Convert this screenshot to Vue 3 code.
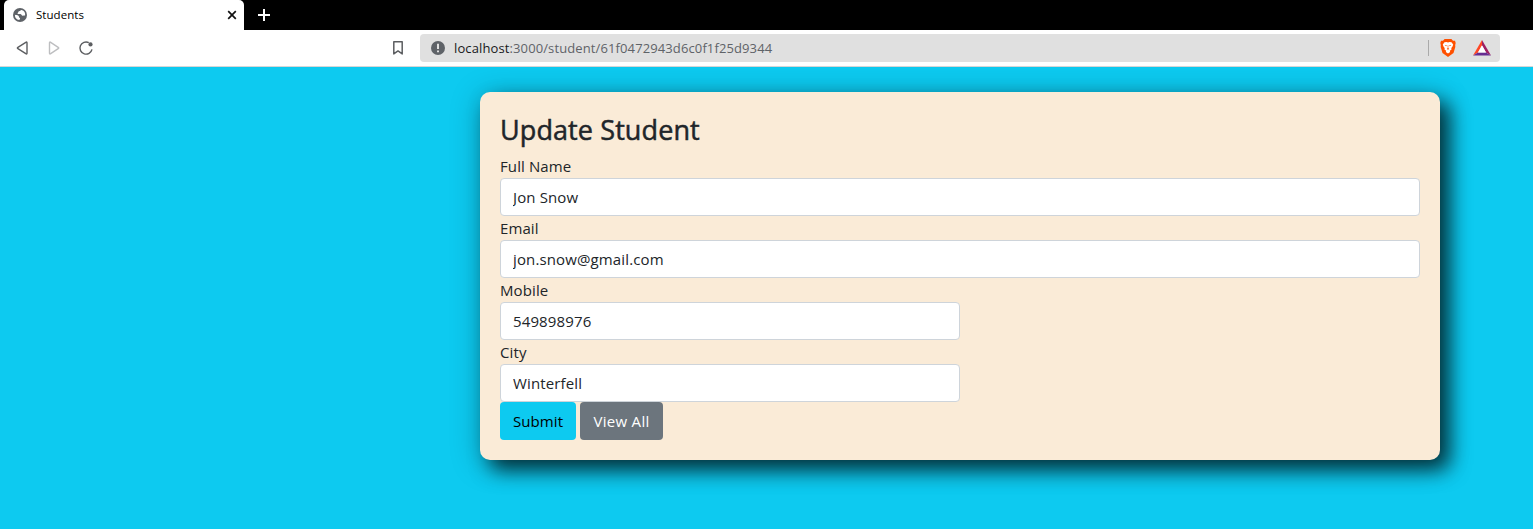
<script setup>
const fields = [
  { id: 'name', label: 'Full Name', value: 'Jon Snow', half: false },
  { id: 'email', label: 'Email', value: 'jon.snow@gmail.com', half: false },
  { id: 'mobile', label: 'Mobile', value: '549898976', half: true },
  { id: 'city', label: 'City', value: 'Winterfell', half: true },
]
</script>

<template>
  <div class="window">
    <header class="tabs">
      <div class="tab">
        <svg class="globe" width="14" height="14" viewBox="0 0 14 14">
          <circle cx="7" cy="7" r="7" fill="#5f6368" />
          <path d="M8.600 1.900C7.200 2 7.300 3.100 6 3.300C5.200 3.500 5.500 4.600 4.700 4.900C4.300 5.400 4.800 6 5.500 6H7.300C8.600 6 8.300 7.500 9.500 7.700C10.500 7.800 11.200 7.500 12.100 7.600A5.200 5.200 0 0 0 8.600 1.900Z M1.900 6.800C2.800 7.200 4.500 7 5.400 7.700C6.300 8.500 5.600 9.500 6.600 9.800C7.500 10.100 7 11.200 6.300 12.100A5.200 5.200 0 0 1 1.900 6.800Z" fill="#fff" />
        </svg>
        <span class="tab-title">Students</span>
        <svg class="close" width="10" height="10" viewBox="0 0 10 10"><path d="M1.200 1.200L8.800 8.800M8.800 1.200L1.200 8.800" stroke="#111" stroke-width="1.700" /></svg>
      </div>
      <svg class="plus" width="12" height="12" viewBox="0 0 12 12"><path d="M6 0V12M0 6H12" stroke="#fff" stroke-width="2" /></svg>
    </header>

    <nav class="toolbar">
      <svg class="nav-icons" width="80" height="16" viewBox="0 0 80 16" fill="none" stroke-width="1.400" stroke-linejoin="round">
        <path d="M11 3Q11 1.600 9.800 2.300L1.900 7.300Q.9 8 1.900 8.700L9.800 13.700Q11 14.400 11 13Z" stroke="#5c5e61" />
        <path d="M33.500 3Q33.500 1.600 34.700 2.300L42.200 7.300Q43.200 8 42.200 8.700L34.700 13.700Q33.500 14.400 33.500 13Z" stroke="#bdbec0" />
        <path d="M72.800 2.600A6.100 6.100 0 1 0 76 9.400" stroke="#5c5e61" />
        <circle cx="74.500" cy="4.400" r="2.100" fill="#5c5e61" />
      </svg>
      <svg class="bookmark" width="10" height="14" viewBox="0 0 10 14"><path d="M.8 .8H9.200V12.900L5 9.900L.8 12.900Z" fill="none" stroke="#5c5e61" stroke-width="1.500" stroke-linejoin="round" /></svg>
      <div class="address">
        <svg class="info" width="14" height="14" viewBox="0 0 14 14"><circle cx="7" cy="7" r="7" fill="#5f6368" /><path d="M7 2.700V8M7 9.500V11.300" stroke="#e0e0e0" stroke-width="2" /></svg>
        <span class="url"><b>localhost</b>:3000/student/61f0472943d6c0f1f25d9344</span>
        <span class="divider"></span>
        <svg class="lion" width="16" height="18" viewBox="0 0 16 18">
          <path d="M4.600 0H11.400L13 1.700L15 1.800L15.700 4L15.200 6L15.300 8L13.500 14L8 18L2.500 14L.7 8L.8 6L.3 4L1 1.800L3 1.700Z" fill="#ff5000" />
          <path d="M4.500 3.200L6.500 2.900L8 3.400L9.500 2.900L11.500 3.200L13.200 5.400L12.500 7.500L11.300 9L11.500 10.500L9.800 11.700L10.200 13L8 14.400L5.800 13L6.200 11.700L4.500 10.500L4.700 9L3.500 7.500L2.800 5.400Z" fill="#fff" />
          <path d="M4.600 6L6.900 6.300L6.200 7.200ZM11.400 6L9.100 6.300L9.800 7.200ZM7.700 6.300V9L6.800 10L8 10.800L9.200 10L8.300 9V6.300Z" fill="#ff5000" />
        </svg>
        <svg class="bat" width="18" height="16" viewBox="0 0 18 16">
          <path d="M9 0L0 15.500L5 12.400L9 5.300Z" fill="#ff4724" />
          <path d="M9 0L18 15.500L13 12.400L9 5.300Z" fill="#9e1f63" />
          <path d="M0 15.500H18L13 12.400H5Z" fill="#662d91" />
          <path d="M9 5.300L13 12.400H5Z" fill="#fff" />
        </svg>
      </div>
    </nav>

    <main class="page">
      <form class="card" @submit.prevent>
        <h2>Update Student</h2>
        <div v-for="f in fields" :key="f.id" class="field" :class="{ half: f.half }">
          <label :for="f.id">{{ f.label }}</label>
          <input :id="f.id" type="text" :value="f.value" />
        </div>
        <div class="actions">
          <button class="submit" type="submit">Submit</button>
          <button class="view" type="button">View All</button>
        </div>
      </form>
    </main>
  </div>
</template>

<style>
body { margin: 0; overflow: hidden; }
</style>

<style scoped>
* { box-sizing: border-box; }
.window { width: 1533px; height: 529px; display: flex; flex-direction: column; font-family: "Open Sans", "Noto Sans", sans-serif; color: #212529; background: #fff; }
svg { display: block; flex: none; }
.tabs { height: 30px; background: #000; display: flex; align-items: center; padding-left: 4px; flex: none; }
.tab { width: 240px; height: 30px; background: #fff; border-radius: 5px 5px 0 0; display: flex; align-items: center; padding: 0 7px 0 9px; }
.tab-title { margin: -1px 0 0 9px; font-size: 11.500px; color: #000; flex: 1; letter-spacing: .05px; }
.plus { margin-left: 14px; }
.toolbar { height: 37px; flex: none; display: flex; align-items: center; padding: 0 33px 1px 16px; border-bottom: 1px solid #d6d6d6; }
.bookmark { margin-left: 297px; }
.address { margin-left: 17px; flex: 1; height: 28px; border-radius: 4px; background: #e0e0e0; display: flex; align-items: center; padding: 0 9px 0 11px; }
.url { margin-left: 9px; font-size: 13px; color: #5f6368; flex: 1; white-space: nowrap; letter-spacing: .115px; }
.url b { font-weight: 400; color: #18191b; }
.divider { width: 1px; height: 16px; background: #aaa; }
.lion { margin-left: 11px; }
.bat { margin-left: 17px; }
.page { flex: 1; background: #0dcaf0; padding: 25px 93px 0 480px; }
.card { width: 960px; height: 368px; padding: 20px; border-radius: 10px; background: #faebd7; box-shadow: 10px 10px 20px rgba(0, 0, 0, .7), 0 4px 30px rgba(0, 0, 0, .25); }
h2 { margin: 0 0 8px; height: 34px; font-size: 27px; font-weight: 500; line-height: 36px; letter-spacing: .1px; -webkit-text-stroke: .5px #212529; }
.field { width: 920px; }
.half { width: 460px; }
label { display: block; width: max-content; height: 24px; line-height: 25px; font-size: 15px; letter-spacing: .1px; }
input { display: block; width: 100%; height: 38px; border: 1px solid #ced4da; border-radius: 4px; background: #fff; padding: 6px 12px; color: #212529; font: 15px/24px "Open Sans", "Noto Sans", sans-serif; letter-spacing: .13px; outline: 0; }
.actions { display: flex; gap: 4px; }
button { height: 38px; border: 0; border-radius: 4px; padding: 0 0 1px; font: 15px/24px "Open Sans", "Noto Sans", sans-serif; letter-spacing: .1px; }
.submit { width: 76px; background: #0dcaf0; color: #000; }
.view { width: 83px; background: #6c757d; color: #fff; letter-spacing: .3px; }
</style>
